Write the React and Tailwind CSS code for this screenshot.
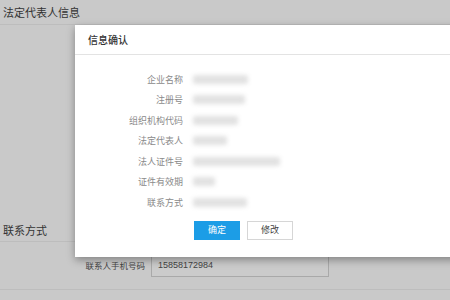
import React from 'react';

const rows = [
  { label: '企业名称', w: 55 },
  { label: '注册号', w: 52 },
  { label: '组织机构代码', w: 45 },
  { label: '法定代表人', w: 34 },
  { label: '法人证件号', w: 87 },
  { label: '证件有效期', w: 22 },
  { label: '联系方式', w: 54 },
];

export default function App() {
  return (
    <div className="relative w-[450px] h-[300px] overflow-hidden bg-[#c9c9c9] font-['Noto_Sans_CJK_SC','Noto_Sans',sans-serif]">
      {/* page underneath */}
      <div className="h-[25px] border-b border-[#bdbdbd] pl-[3px] pt-[3px] text-[11px] leading-[18px] text-[#333]">
        法定代表人信息
      </div>
      <div className="h-[196px]" />
      <div className="h-[21px] border-b border-[#bdbdbd] pl-[3px] text-[11px] leading-[18px] text-[#333]">
        联系方式
      </div>
      <div className="flex items-center h-[48px] border-b border-[#bdbdbd]">
        <div className="w-[147px] pr-[2px] text-right text-[8.5px] text-[#444]">联系人手机号码</div>
        <div className="ml-[4px] flex items-center w-[178px] h-[22px] border border-[#a9a9a9] bg-[#cbcbcb] pl-[6px] text-[9px] text-[#444] font-['Liberation_Sans',sans-serif]">
          15858172984
        </div>
      </div>

      {/* dialog */}
      <div className="absolute left-[75px] top-[25px] w-[390px] h-[232px] bg-white shadow-[0_3px_8px_rgba(0,0,0,0.35)]">
        <div className="flex items-center h-[30px] border-b border-[#e3e3e3] pl-[13px] text-[10px] text-[#333] font-medium">
          信息确认
        </div>
        <div className="pt-[14px]">
          {rows.map((r) => (
            <div key={r.label} className="flex items-center h-[20.5px]">
              <div className="w-[108px] text-right text-[9px] text-[#8a8a8a]">{r.label}</div>
              <div className="ml-[10px] h-[9px] rounded-[2px] bg-[#e2e2e2] blur-[2px]" style={{ width: r.w }} />
            </div>
          ))}
        </div>
        <div className="flex gap-[7px] pl-[119px] mt-[8px]">
          <div className="flex items-center justify-center w-[46px] h-[19px] bg-[#1c9de6] text-[9px] text-white">确定</div>
          <div className="flex items-center justify-center w-[46px] h-[19px] border border-[#d6d6d6] bg-white text-[9px] text-[#444]">修改</div>
        </div>
      </div>
    </div>
  );
}
